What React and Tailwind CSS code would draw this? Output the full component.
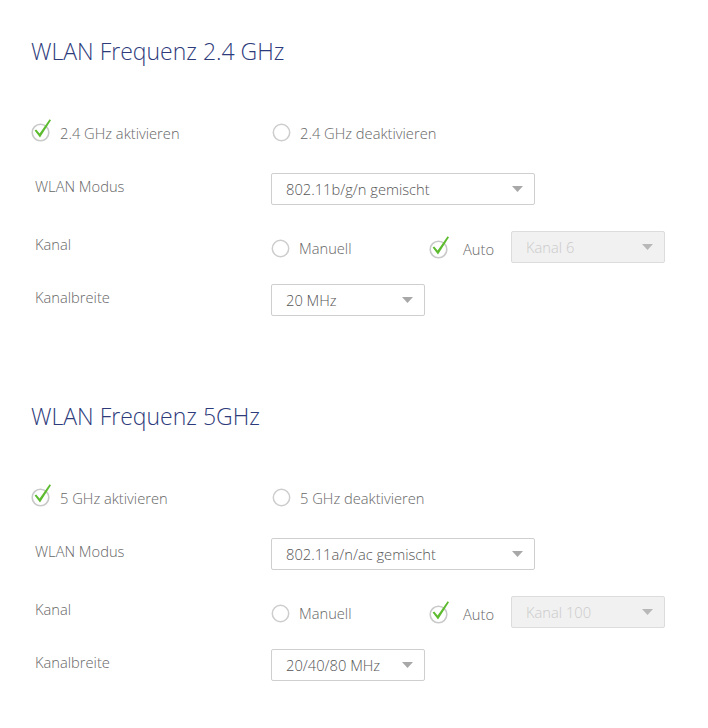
import React from "react";

const font = { fontFamily: '"Open Sans", "Liberation Sans", sans-serif' };

function CheckIcon() {
  return (
    <svg width="22" height="24" viewBox="0 0 22 24" className="shrink-0">
      <circle cx="9.5" cy="14.5" r="8.3" fill="none" stroke="#c9c9c9" strokeWidth="1.6" />
      <path d="M3.6 12.6 L5.2 11.4 L8.6 15.6 L18.6 1.2 L20 2.2 L9 19.4 Z" fill="#5dbb2f" />
    </svg>
  );
}

function RadioIcon() {
  return (
    <svg width="19" height="19" viewBox="0 0 19 19" className="shrink-0">
      <circle cx="9.5" cy="9.5" r="8.2" fill="none" stroke="#cdcdcd" strokeWidth="1.5" />
    </svg>
  );
}

function Arrow({ color = "#a8a8a8" }) {
  return (
    <svg width="11" height="6" viewBox="0 0 11 6" className="shrink-0">
      <path d="M0 0 L11 0 L5.5 6 Z" fill={color} />
    </svg>
  );
}

function Select({ value, width, disabled }) {
  return (
    <div
      className={
        "h-[32px] rounded-[2px] border flex items-center justify-between pl-[14px] pr-[11px] text-[14.7px] font-light " +
        (disabled
          ? "bg-[#f1f1f1] border-[#dcdcdc] text-[#cbcbcb]"
          : "bg-white border-[#cfcfcf] text-[#555]")
      }
      style={{ width }}
    >
      <span>{value}</span>
      <Arrow color={disabled ? "#b8b8b8" : "#a8a8a8"} />
    </div>
  );
}

function Label({ children }) {
  return (
    <div className="w-[240px] shrink-0 pl-[4px] pt-[3px] leading-[20px] text-[14.7px] font-light text-[#666]">
      {children}
    </div>
  );
}

function Section({ title, on, off, modus, kanal, breite, first }) {
  return (
    <div className={first ? "h-[365px]" : ""}>
      <h2 className="h-[32px] leading-[32px] text-[23px] font-light text-[#2e3b7b]">{title}</h2>
      <div className="mt-[51px] h-[30px] flex items-center text-[14.7px] font-light text-[#666]">
        <div className="w-[241px] flex items-center gap-[7px]">
          <div className="-mt-[6px]">
            <CheckIcon />
          </div>
          <span>{on}</span>
        </div>
        <div className="flex items-center gap-[9px]">
          <RadioIcon />
          <span>{off}</span>
        </div>
      </div>
      <div className="mt-[25px] flex">
        <Label>WLAN Modus</Label>
        <Select value={modus} width={264} />
      </div>
      <div className="mt-[26px] flex">
        <Label>Kanal</Label>
        <div className="flex items-center text-[14.7px] font-light text-[#666]">
          <div className="w-[158px] flex items-center gap-[9px] pt-[3px]">
            <RadioIcon />
            <span>Manuell</span>
          </div>
          <div className="w-[82px] flex items-center gap-[12px]">
            <CheckIcon />
            <span className="pt-[4px]">Auto</span>
          </div>
          <Select value={kanal} width={154} disabled />
        </div>
      </div>
      <div className="mt-[21px] flex">
        <Label>Kanalbreite</Label>
        <Select value={breite} width={154} />
      </div>
    </div>
  );
}

export default function App() {
  return (
    <div className="w-[708px] h-[728px] overflow-hidden bg-white pt-[35px] pl-[31px]" style={font}>
      <Section
        first
        title="WLAN Frequenz 2.4 GHz"
        on="2.4 GHz aktivieren"
        off="2.4 GHz deaktivieren"
        modus="802.11b/g/n gemischt"
        kanal="Kanal 6"
        breite="20 MHz"
      />
      <Section
        title="WLAN Frequenz 5GHz"
        on="5 GHz aktivieren"
        off="5 GHz deaktivieren"
        modus="802.11a/n/ac gemischt"
        kanal="Kanal 100"
        breite="20/40/80 MHz"
      />
    </div>
  );
}
